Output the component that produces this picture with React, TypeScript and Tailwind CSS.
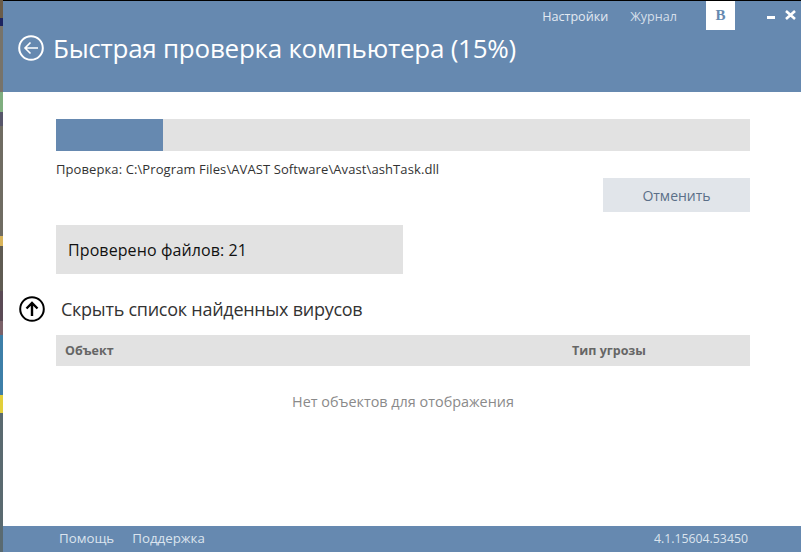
const font = { sans: "font-['Open_Sans','Noto_Sans',sans-serif]" };

const stripColors = [
  "h-[18px] bg-[#6b5c48]", "h-[8px] bg-[#1c2460]", "h-[66px] bg-[#77736a]", "h-[20px] bg-[#7fae7f]", "h-[14px] bg-[#57566a]",
  "h-[110px] bg-[#6f6c62]", "h-[10px] bg-[#d9b45a]", "h-[45px] bg-[#5f5b52]", "h-[30px] bg-[#5a4a55]", "h-[14px] bg-[#7a6168]",
  "h-[60px] bg-[#3d7fa8]", "h-[18px] bg-[#e2cf3a]", "flex-1 bg-[#5a6a70]",
];

const CircleArrow = ({ up, color }: { up?: boolean; color: string }) => (
  <svg width="26" height="26" viewBox="0 0 26 26" fill="none" stroke={color} strokeWidth="2">
    <circle cx="13" cy="13" r="11.8" />
    {up
      ? <path d="M13 20V7M7.5 12.5 13 7l5.5 5.5" strokeWidth="2.4" />
      : <path d="M20 13H7M12.5 7.5 7 13l5.5 5.5" strokeWidth="1.6" />}
  </svg>
);

export default function App() {
  return (
    <div className={`flex h-[552px] w-[801px] overflow-hidden bg-white ${font.sans}`}>
      <div className="flex w-[3px] flex-col">
        {stripColors.map((c, i) => <div key={i} className={c} />)}
      </div>
      <div className="flex flex-1 flex-col">
        <div className="h-px bg-black" />
        <header className="flex h-[91px] flex-col bg-[#6689b0] text-white">
          <div className="flex h-[29px] items-start justify-end">
            <span className="mt-[7px] text-[12.6px] leading-[18px] text-[#e3eaf2]">Настройки</span>
            <span className="ml-[22px] mt-[7px] text-[12.6px] leading-[18px] text-[#d5dfea]">Журнал</span>
            <div className="ml-[29px] flex h-[29px] w-[29px] items-center justify-center bg-white font-['Liberation_Serif',serif] text-[15px] font-bold text-[#6689b0]">В</div>
            <div className="ml-[32px] mt-[15px] h-[3px] w-[8px] bg-white" />
            <svg className="ml-[9px] mr-[4px] mt-[9px]" width="13" height="10" viewBox="0 0 13 10" stroke="white" strokeWidth="2.6" fill="none">
              <path d="M2 1l9 8M11 1 2 9" />
            </svg>
          </div>
          <div className="mt-[3px] flex items-center pl-[15px]">
            <CircleArrow color="white" />
            <h1 className="ml-[9px] text-[26px] font-normal leading-[30px] tracking-[-0.26px]">Быстрая проверка компьютера (15%)</h1>
          </div>
        </header>

        <main className="flex flex-1 flex-col pl-[53px] pr-[51px] pt-[27px]">
          <div className="h-[32px] bg-[#e2e2e2]">
            <div className="h-full w-[107px] bg-[#6689b0]" />
          </div>
          <p className="mt-[9px] text-[13px] leading-[18px] tracking-[0.1px] text-[#333]">Проверка: C:\Program Files\AVAST Software\Avast\ashTask.dll</p>
          <div className="flex justify-end">
            <button className="h-[34px] w-[147px] bg-[#e1e5ea] text-[14px] text-[#5b6f88]">Отменить</button>
          </div>
          <div className="mt-[13px] flex h-[49px] w-[347px] items-center bg-[#e2e2e2] pl-[12px] pt-px text-[16px] tracking-[0.1px] text-[#111]">Проверено файлов: 21</div>
          <div className="-ml-[37px] mt-[22px] flex h-[26px] items-center">
            <CircleArrow up color="black" />
            <span className="ml-[16px] pt-px text-[18px] tracking-[-0.26px] text-[#333]">Скрыть список найденных вирусов</span>
          </div>
          <div className="mt-[13px] flex h-[31px] items-center bg-[#e2e2e2] pl-[9px] pt-px text-[12.5px] font-bold text-[#666]">
            <span className="w-[507px]">Объект</span>
            <span>Тип угрозы</span>
          </div>
          <p className="mt-[26px] text-center text-[14.4px] leading-[20px] text-[#8a8a8a]">Нет объектов для отображения</p>
        </main>

        <footer className="flex h-[26px] items-center bg-[#6689b0] pl-[56px] pr-[53px] text-[13.3px] text-[#dbe4ee]">
          <span>Помощь</span>
          <span className="ml-[18px]">Поддержка</span>
          <span className="ml-auto text-[12.3px]">4.1.15604.53450</span>
        </footer>
      </div>
    </div>
  );
}
